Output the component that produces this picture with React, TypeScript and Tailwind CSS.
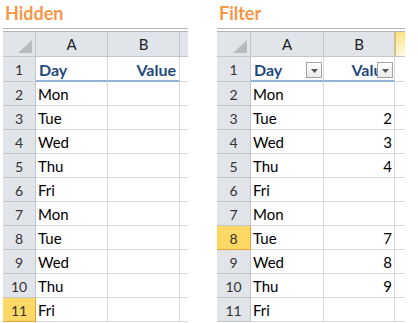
import React from "react";

const DAYS = ["Mon", "Tue", "Wed", "Thu", "Fri", "Mon", "Tue", "Wed", "Thu", "Fri"];

type Widths = { rh: string; a: string; b: string; x: string };

type SheetProps = {
  title: string;
  w: Widths;
  selectedRow: number;
  values: string[];
  filter?: boolean;
};

function Corner() {
  return (
    <svg width="14" height="13" viewBox="0 0 14 13" className="absolute right-[3px] bottom-[3px]">
      <polygon points="14,0 14,13 0,13" fill="#b7bbc0" />
    </svg>
  );
}

function FilterButton() {
  return (
    <div className="absolute right-[1px] bottom-[2px] w-[16px] h-[16px] border border-[#a3a3a3] bg-gradient-to-b from-white to-[#e9e9e9] flex items-center justify-center">
      <svg width="7" height="4" viewBox="0 0 7 4" className="mt-[2px]">
        <polygon points="0,0 7,0 3.5,4" fill="#555" />
      </svg>
    </div>
  );
}

function Sheet({ title, w, selectedRow, values, filter }: SheetProps) {
  const hdr = "h-full bg-[#e1e4e8] border-r border-[#c3c7cc] flex items-center justify-center text-[15px] text-[#222]";
  return (
    <div className="flex flex-col">
      <div className="h-[28px] pt-[2px] pl-[2px] text-[18px] leading-[22px] font-bold text-[#f79646]">{title}</div>
      <div className="border-t border-[#b4b4b4] h-[3px]" />
      <div className="border-t border-[#b4b4b4]" />
      {/* column headers */}
      <div className="flex h-[25px] border-b border-[#c3c7cc]">
        <div className={`${w.rh} relative ${hdr}`}>
          <Corner />
        </div>
        <div className={`${w.a} ${hdr}`}>A</div>
        <div className={`${w.b} ${hdr}`}>B</div>
        {filter ? (
          <div className={`${w.x} h-full border-l border-[#e7b94c] bg-gradient-to-b from-[#ffe37f] to-[#fff8df]`} />
        ) : (
          <div className={`${w.x} h-full bg-[#e1e4e8]`} />
        )}
      </div>
      {/* row 1 */}
      <div className="flex h-[25px]">
        <div className={`${w.rh} h-full bg-[#e1e4e8] border-r border-b border-[#c3c7cc] flex items-center justify-center text-[14px] text-[#333]`}>
          1
        </div>
        <div className={`${w.a} relative h-full border-r border-b-2 border-r-[#d9d9d9] border-b-[#95b3d7] flex items-center pl-[3px] pt-[2px] text-[16px] font-bold text-[#1f497d]`}>
          Day
          {filter && <FilterButton />}
        </div>
        <div className={`${w.b} relative h-full border-r border-b-2 border-r-[#d9d9d9] border-b-[#95b3d7] flex items-center justify-end pr-[3px] pt-[2px] text-[16px] font-bold text-[#1f497d] overflow-hidden`}>
          Value
          {filter && <FilterButton />}
        </div>
        <div className={`${w.x} h-full border-b border-[#d9d9d9]`} />
      </div>
      {DAYS.map((d, i) => {
        const row = i + 2;
        const sel = row === selectedRow;
        return (
          <div key={row} className="flex h-[24px]">
            <div
              className={`${w.rh} h-full border-r border-b flex items-center justify-center text-[14px] text-[#333] pt-[1px] ${
                sel ? "bg-[#fed865] border-[#e9a23a]" : "bg-[#e1e4e8] border-[#c3c7cc]"
              }`}
            >
              {row}
            </div>
            <div className={`${w.a} h-full border-r border-b border-[#d9d9d9] flex items-center pl-[2px] pt-[1px] text-[15px] text-black`}>
              {d}
            </div>
            <div className={`${w.b} h-full border-r border-b border-[#d9d9d9] flex items-center justify-end pr-[2px] pt-[1px] text-[15px] text-black`}>
              {values[i] ?? ""}
            </div>
            <div className={`${w.x} h-full border-b border-[#d9d9d9]`} />
          </div>
        );
      })}
    </div>
  );
}

export default function App() {
  return (
    <div className="w-[418px] h-[323px] bg-white flex font-['Lato',sans-serif] overflow-hidden">
      <div className="ml-[3px]">
        <Sheet
          title="Hidden"
          w={{ rh: "w-[33px]", a: "w-[72px]", b: "w-[72px]", x: "w-[8px]" }}
          selectedRow={11}
          values={[]}
        />
      </div>
      <div className="ml-[29px]">
        <Sheet
          title="Filter"
          w={{ rh: "w-[34px]", a: "w-[73px]", b: "w-[71px]", x: "w-[10px]" }}
          selectedRow={8}
          values={["", "2", "3", "4", "", "", "7", "8", "9", ""]}
          filter
        />
      </div>
    </div>
  );
}
